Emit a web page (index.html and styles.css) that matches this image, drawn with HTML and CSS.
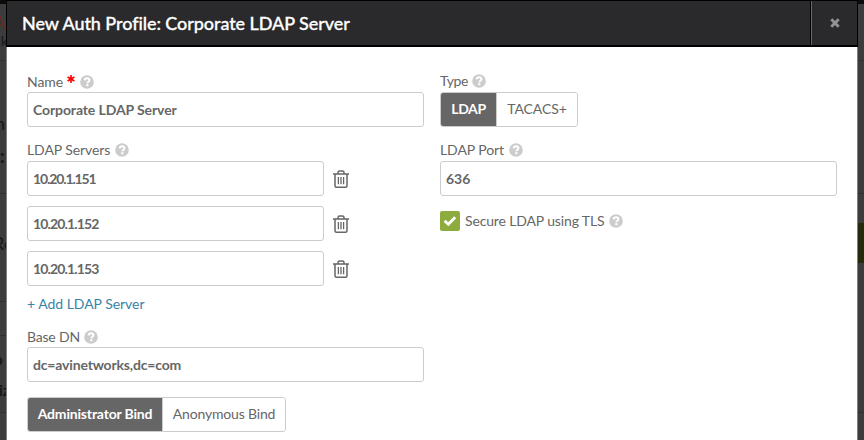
FILE: index.html
```html
<!DOCTYPE html>
<html lang="en">
<head>
<meta charset="utf-8">
<title>New Auth Profile</title>
<link rel="stylesheet" href="styles.css">
</head>
<body>
<svg class="defs" width="0" height="0" aria-hidden="true">
  <symbol id="help" viewBox="0 0 14 14">
    <circle cx="7" cy="7" r="6.8" fill="#ccc"/>
    <path d="M4.6 5.3C4.800 3.900 5.900 3.300 7.100 3.300c1.400 0 2.300.7 2.300 1.900 0 1.500-2.100 1.500-2.100 3.100" fill="none" stroke="#fff" stroke-width="2"/>
    <rect x="6.200" y="9.200" width="2.200" height="2" fill="#fff"/>
  </symbol>
  <symbol id="trash" viewBox="0 0 16 18">
    <g fill="none" stroke="#666" stroke-width="1.500">
      <path d="M0 4.100h16M2 4.500v11.200q0 1.500 1.500 1.500h9q1.500 0 1.500-1.500V4.500M5 3.700V2.600Q5 1 6.600 1h2.800Q11 1 11 2.600v1.100"/>
      <path d="M5.400 7v7.300M8 7v7.300M10.600 7v7.300" stroke-width="1.300"/>
    </g>
  </symbol>
</svg>
<div class="page" aria-hidden="true">
  <div class="topbar"></div>
  <span class="bit bit-a">A</span>
  <span class="bit bit-ck">ck</span>
  <span class="bit bit-n">n</span>
  <span class="bit bit-colon">:</span>
  <span class="bit bit-re">Re</span>
  <span class="bit bit-o">o</span>
  <span class="bit bit-iz">iz</span>
  <i class="rule r1"></i><i class="rule r2"></i><i class="rule r3"></i><i class="rule r4"></i><i class="rule r5"></i>
  <i class="green"></i>
</div>
<main class="modal">
  <header class="head">
    <h1><span class="t-title">New Auth Profile: Corporate LDAP Server</span></h1>
    <button class="close" aria-label="Close"><svg width="10" height="10" viewBox="0 0 10 10"><path d="M1.300 1.300l7.400 7.400M8.700 1.300L1.300 8.700" stroke="#929297" stroke-width="2.900"/></svg></button>
  </header>
  <div class="body">
    <section class="col">
      <div class="label"><span class="t-name">Name</span><b class="req"><svg width="8" height="8" viewBox="0 0 8 8"><path d="M4 0v8M.6 2l6.800 4M7.400 2L.6 6" stroke="#f00" stroke-width="1.600"/></svg></b><svg class="help"><use href="#help"/></svg></div>
      <div class="field"><span class="t-corp">Corporate LDAP Server</span></div>
      <div class="label next"><span class="t-servers">LDAP Servers</span><svg class="help"><use href="#help"/></svg></div>
      <div class="servers">
        <div class="server"><div class="field"><span class="t-ip1">10.20.1.151</span></div><svg class="trash"><use href="#trash"/></svg></div>
        <div class="server"><div class="field"><span class="t-ip2">10.20.1.152</span></div><svg class="trash"><use href="#trash"/></svg></div>
        <div class="server"><div class="field"><span class="t-ip2">10.20.1.153</span></div><svg class="trash"><use href="#trash"/></svg></div>
      </div>
      <a class="add"><span class="t-add">+ Add LDAP Server</span></a>
      <div class="label base"><span class="t-base">Base DN</span><svg class="help"><use href="#help"/></svg></div>
      <div class="field"><span class="t-dc">dc=avinetworks,dc=com</span></div>
      <div class="toggle bind"><button class="on"><span class="t-admin">Administrator Bind</span></button><button><span class="t-anon">Anonymous Bind</span></button></div>
    </section>
    <section class="col">
      <div class="label raised"><span class="t-type">Type</span><svg class="help"><use href="#help"/></svg></div>
      <div class="toggle type"><button class="on"><span class="t-ldap">LDAP</span></button><button><span class="t-tacacs">TACACS+</span></button></div>
      <div class="label next"><span class="t-port">LDAP Port</span><svg class="help"><use href="#help"/></svg></div>
      <div class="field"><span class="t-636">636</span></div>
      <div class="check"><span class="box"><svg width="14" height="12" viewBox="0 0 14 12"><path d="M1.600 5.700L5.300 9.300L12.200 2.300" fill="none" stroke="#fff" stroke-width="2.800"/></svg></span><span class="t-tls">Secure LDAP using TLS</span><svg class="help"><use href="#help"/></svg></div>
    </section>
  </div>
</main>
</body>
</html>
```
FILE: styles.css
```css
* { box-sizing: border-box; }
body { margin: 0; width: 864px; height: 440px; overflow: hidden; background: #3b3c3c; font: 14px Lato, sans-serif; color: #666; position: relative; }
.defs { position: absolute; }
span { white-space: nowrap; }
.page { position: absolute; inset: 0; overflow: hidden; }
.topbar { height: 4px; background: #0b0b0b; }
.bit { position: absolute; line-height: 20px; color: #171717; }
.bit-a { left: -6px; top: 13px; font-size: 17px; color: #67291b; }
.bit-ck { left: -6px; top: 31px; font-size: 14px; }
.bit-n { left: -5px; top: 113px; font-size: 18px; }
.bit-colon { left: 0; top: 146px; font-size: 18px; font-weight: bold; }
.bit-re { left: -7px; top: 233px; font-size: 18px; }
.bit-o { left: -6px; top: 349px; font-size: 15px; font-weight: bold; }
.bit-iz { left: -1px; top: 380px; font-size: 15px; font-weight: bold; }
.rule { position: absolute; left: 0; width: 864px; height: 1px; background: #2e2e2e; }
.r1 { top: 193px; }
.r2 { top: 301px; width: 8px; }
.r3 { top: 335px; width: 8px; }
.r4 { top: 412px; }
.r5 { top: 60px; background: #333; }
.green { position: absolute; right: 0; top: 223px; width: 8px; height: 40px; background: #232b0c; }
.modal { position: relative; margin-left: 6px; width: 852px; height: 440px; background: #fff; border: solid #808080; border-width: 0 1px; }
.head { display: flex; height: 47px; margin: 0 -1px; background: #2a2a2c; border: 1px solid #000; border-bottom-width: 2px; }
.head h1 { flex: 1; margin: 0; padding-left: 15px; font-size: 18px; line-height: 45px; font-weight: 500; color: #fff; -webkit-text-stroke: .3px #fff; }
.close { width: 46px; padding: 0; border: 0; border-left: 1px solid #68686a; background: none; box-shadow: -1px 0 #000; display: flex; align-items: center; justify-content: center; }
.body { display: grid; grid-template-columns: 397px 397px; gap: 16px; padding: 25px 20px 0; }
.label { display: flex; align-items: center; height: 20px; padding-bottom: 1px; line-height: 17px; }
.label > span { margin-top: -1px; }
.help { width: 14px; height: 14px; margin-left: 5px; flex: none; }
.req { display: flex; margin: -5px 0 0 4px; }
.next { padding-bottom: 2px; margin-top: 14px; }
.raised { padding-bottom: 2px; }
.raised .help, .base .help { margin-left: 4px; }
.field { height: 35px; border: 1px solid #ccc; border-radius: 3px; padding: 0 5px; line-height: 33px; font-weight: bold; }
.servers { display: grid; gap: 10px; }
.server { display: flex; align-items: center; gap: 9px; }
.server .field { width: 297px; }
.trash { width: 16px; height: 18px; }
.add { display: flex; align-items: center; height: 36px; margin-bottom: 5px; padding-bottom: 2px; color: #3884a8; }
.toggle { display: flex; height: 35px; border: 1px solid #ccc; border-radius: 3px; overflow: hidden; }
.toggle button { padding: 0 0 2px; border: 0; background: #fff; color: #666; font: 14px/31px Lato, sans-serif; flex: 1; }
.toggle .on { flex: none; background: #666; color: #fff; font-weight: bold; border-right: 1px solid #ccc; }
.bind { width: 259px; margin-top: 15px; }
.bind .on { width: 135px; }
.type { width: 138px; }
.type .on { width: 56px; }
.check { display: flex; align-items: center; height: 20px; margin-top: 15px; }
.check > .t-tls { margin-top: -2px; }
.box { display: flex; align-items: center; justify-content: center; width: 20px; height: 20px; margin-right: 5px; border-radius: 2px; background: #8dac3d; }
.t-title { letter-spacing: -.07px; }
.t-corp { letter-spacing: -.1px; }
.t-name, .t-servers, .t-port { letter-spacing: -.09px; }
.t-add { letter-spacing: -.03px; }
.t-ip1 { letter-spacing: -1.12px; }
.t-ip2 { letter-spacing: -.85px; }
.t-base { letter-spacing: -.2px; }
.t-type { letter-spacing: -.4px; }
.t-dc, .t-admin, .t-anon { letter-spacing: -.17px; }
.t-ldap { letter-spacing: -.4px; }
.t-tacacs { letter-spacing: -.1px; }
.t-tls { letter-spacing: -.14px; }
```
